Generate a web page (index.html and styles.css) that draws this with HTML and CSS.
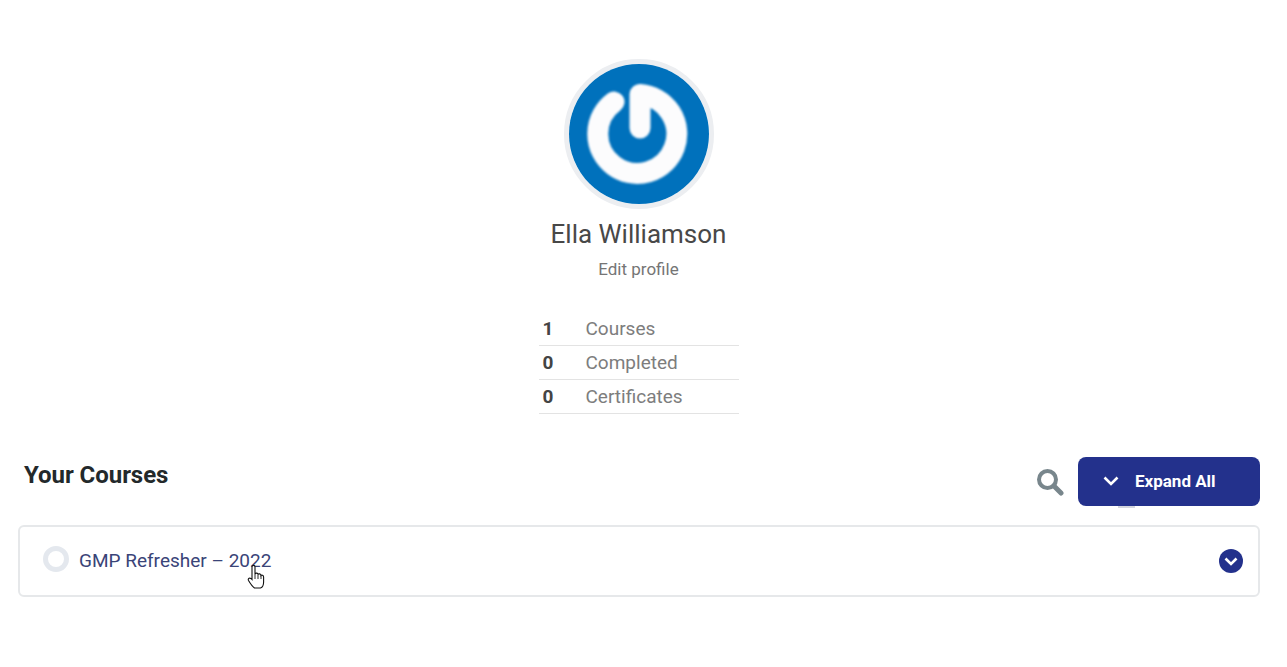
FILE: index.html
```html
<!DOCTYPE html>
<html lang="en">
<head>
    <meta charset="UTF-8">
    <meta name="viewport" content="width=device-width, initial-scale=1.0">
    <title>Ella Williamson - Your Courses</title>
    <link rel="stylesheet" href="styles.css">
</head>
<body>
    <div class="profile">
        <div class="avatar">
            <svg viewBox="0 0 140 140" width="140" height="140">
                <circle cx="70" cy="70" r="70" fill="#0071bc"/>
                <path class="logo-mark" d="M45 38 A39.5 39.5 0 1 0 71 30.5 V64" fill="none" stroke="#fcfcfd" stroke-width="21" stroke-linecap="round" stroke-linejoin="round"/>
            </svg>
        </div>
        <div class="name">Ella Williamson</div>
        <a class="edit-link">Edit profile</a>
        <ul class="stats">
            <li><b>1</b><span>Courses</span></li>
            <li><b>0</b><span>Completed</span></li>
            <li><b>0</b><span>Certificates</span></li>
        </ul>
    </div>

    <div class="courses-head">
        <h2>Your Courses</h2>
        <div class="tools">
            <svg class="search" viewBox="0 0 28 28" width="28" height="28">
                <circle cx="11.5" cy="11.5" r="8.5" fill="none" stroke="#78868c" stroke-width="4"/>
                <path d="M18 18 L25 25" stroke="#78868c" stroke-width="5" stroke-linecap="round"/>
            </svg>
            <button class="btn">
                <svg viewBox="0 0 16 10" width="16" height="10"><path d="M1.5 1.5 L8 8 L14.5 1.5" fill="none" stroke="#fff" stroke-width="2.6"/></svg>
                Expand All
                <span class="btn-stub"></span>
            </button>
        </div>
    </div>

    <div class="course">
        <span class="ring"></span>
        <a class="course-title">GMP Refresher – 2022</a>
        <span class="toggle">
            <svg viewBox="0 0 24 24" width="24" height="24">
                <circle cx="12" cy="12" r="12" fill="#23318c"/>
                <path d="M6.5 9.5 L12 15 L17.5 9.5" fill="none" stroke="#fff" stroke-width="2.6"/>
            </svg>
        </span>
        <svg class="cursor" viewBox="0 0 18 25" width="18" height="25">
            <path d="M5 14 V3 C5 .8 8 .8 8 3 V10 C8.5 8.8 11 8.8 11 10.5 C11.5 9.5 13.8 9.5 14 11.5 C14.5 10.8 16.6 11 16.6 13 V18 C16.6 21 15 23.5 13.5 24 H7.5 C6 23 3 19 1.5 16.5 C.5 14.5 2.8 13 5 15.5 Z" fill="#fff" stroke="#111" stroke-width="1.1"/>
            <path d="M8 10 V15 M11 10.5 V15 M14 11.5 V15" fill="none" stroke="#111" stroke-width=".9"/>
        </svg>
    </div>
</body>
</html>
```

FILE: styles.css
```css
body {
    margin: 0;
    font-family: Roboto, "Liberation Sans", sans-serif;
    background: #fff;
    color: #444;
}
.profile {
    display: flex;
    flex-direction: column;
    align-items: center;
    padding: 59px 10px 0 0;
}
.avatar {
    width: 140px;
    height: 140px;
    border: 5px solid #eceef1;
    border-radius: 50%;
}
.avatar svg {
    display: block;
}
.logo-mark {
    filter: blur(1.2px);
}
.name {
    font-size: 26px;
    line-height: 32px;
    margin-top: 9px;
    color: #484848;
}
.edit-link {
    font-size: 17px;
    line-height: 20px;
    margin-top: 9px;
    color: #757575;
}
.stats {
    list-style: none;
    margin: 33px 0 0;
    padding: 0;
    width: 200px;
}
.stats li {
    display: flex;
    height: 33px;
    line-height: 33px;
    border-bottom: 1px solid #e3e3e3;
    font-size: 19px;
}
.stats b {
    width: 47px;
    padding-left: 4px;
    box-sizing: border-box;
    color: #444;
}
.stats span {
    color: #7d7d7d;
}
.courses-head {
    display: flex;
    justify-content: space-between;
    margin: 43px 27px 0 24px;
}
.courses-head h2 {
    margin: 3px 0 0;
    font-size: 24px;
    line-height: 30px;
    letter-spacing: -.05px;
    color: #23292b;
}
.tools {
    display: flex;
    align-items: center;
    gap: 14px;
}
.search {
    margin-top: 1px;
}
.btn {
    position: relative;
    display: flex;
    align-items: center;
    gap: 16px;
    width: 182px;
    height: 49px;
    padding: 0 0 2px 25px;
    background: #23318c;
    color: #fff;
    border: none;
    border-radius: 8px;
    font-family: inherit;
    font-size: 17px;
    font-weight: 700;
}
.btn-stub {
    position: absolute;
    left: 40px;
    bottom: -2px;
    width: 17px;
    height: 2px;
    background: #d4d6de;
}
.course {
    position: relative;
    display: flex;
    align-items: center;
    height: 68px;
    margin: 19px 27px 0 18px;
    padding: 0 15px 0 23px;
    border: 2px solid #e6e8ea;
    border-radius: 6px;
}
.ring {
    width: 16px;
    height: 16px;
    border: 5px solid #e4e8ee;
    border-radius: 50%;
    margin-top: -4px;
}
.course-title {
    margin-left: 10px;
    padding-bottom: 2px;
    font-size: 19px;
    color: #3a4478;
}
.toggle {
    margin-left: auto;
    height: 24px;
}
.cursor {
    position: absolute;
    left: 227px;
    top: 37px;
}
```
